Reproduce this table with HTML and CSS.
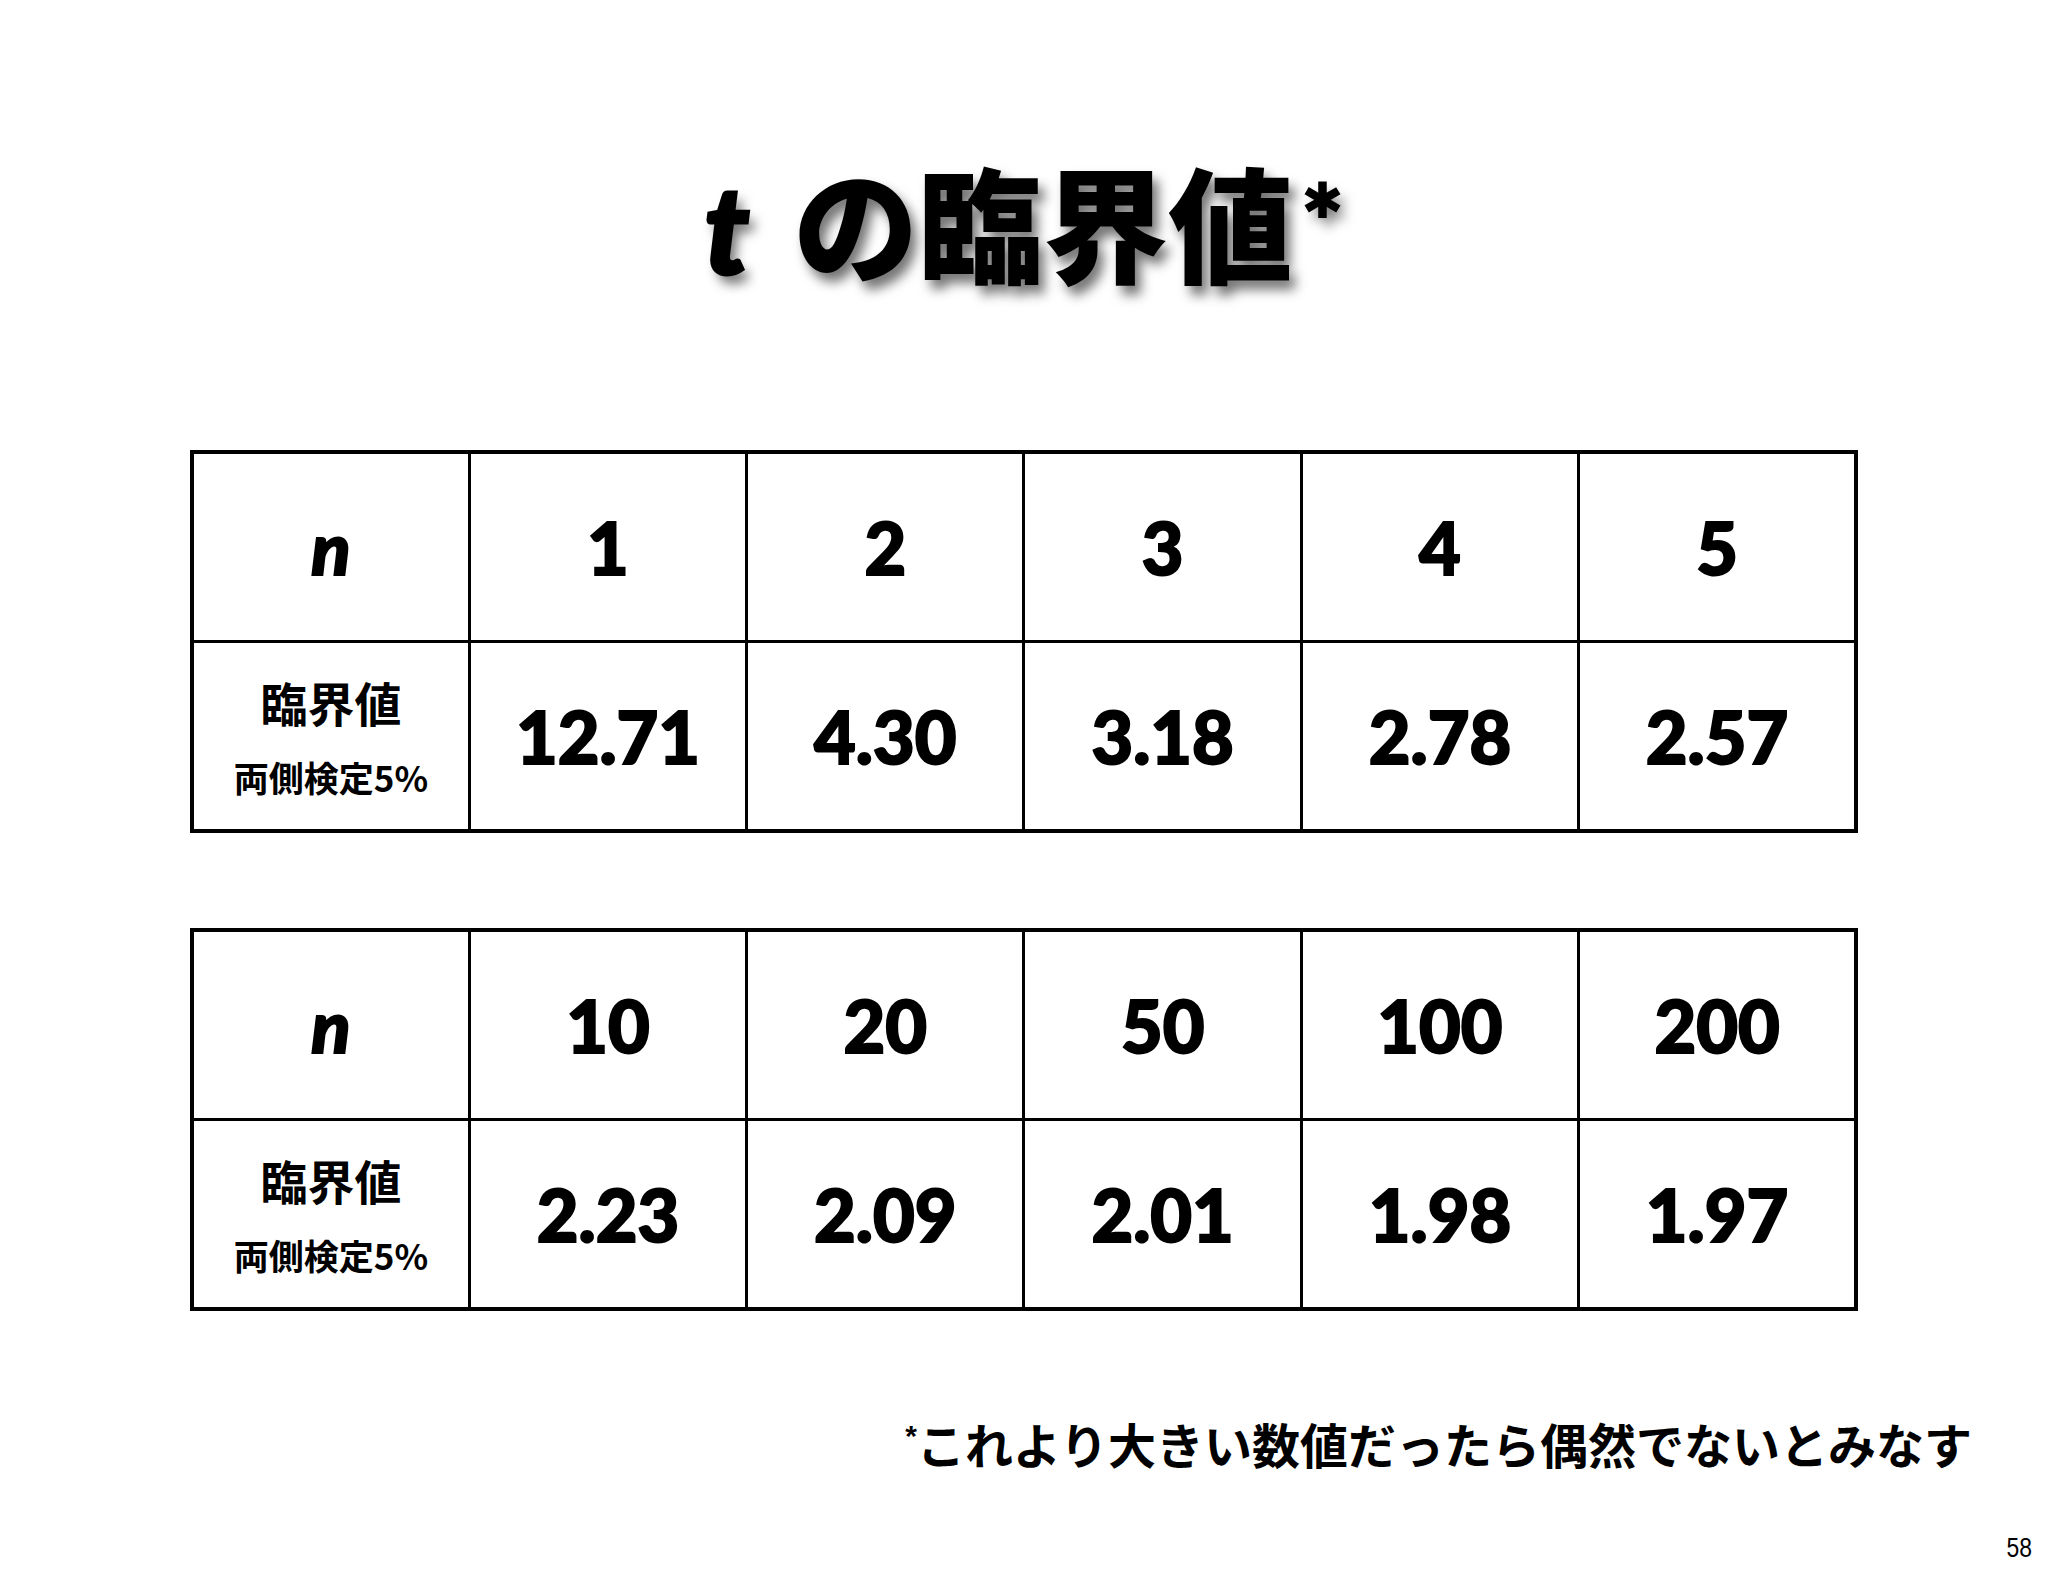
FILE: index.html
```html
<!DOCTYPE html>
<html lang="ja">
<head>
<meta charset="utf-8">
<title>t の臨界値</title>
<link rel="stylesheet" href="styles.css">
</head>
<body>
<div class="slide">
  <h1 class="title"><span class="t">t</span><span class="jp">の臨界値</span><span class="star">*</span></h1>

  <table class="crit first">
    <tr class="head">
      <td class="label"><span class="n">n</span></td>
      <td>1</td><td>2</td><td>3</td><td>4</td><td>5</td>
    </tr>
    <tr class="vals">
      <td class="label"><div class="l1">臨界値</div><div class="l2">両側検定5%</div></td>
      <td>12.71</td><td>4.30</td><td>3.18</td><td>2.78</td><td>2.57</td>
    </tr>
  </table>

  <table class="crit second">
    <tr class="head">
      <td class="label"><span class="n">n</span></td>
      <td>10</td><td>20</td><td>50</td><td>100</td><td>200</td>
    </tr>
    <tr class="vals">
      <td class="label"><div class="l1">臨界値</div><div class="l2">両側検定5%</div></td>
      <td>2.23</td><td>2.09</td><td>2.01</td><td>1.98</td><td>1.97</td>
    </tr>
  </table>

  <p class="note"><span class="nstar">*</span>これより大きい数値だったら偶然でないとみなす</p>
  <div class="page">58</div>
</div>
</body>
</html>
```

FILE: styles.css
```css
html, body {
  margin: 0;
  padding: 0;
  background: #fff;
}
.slide {
  width: 2048px;
  height: 1576px;
  position: relative;
  display: flex;
  flex-direction: column;
  color: #000;
  font-family: "Lato", "Noto Sans CJK JP", sans-serif;
}
.title {
  margin: 144px 0 0 0;
  height: 150px;
  line-height: 150px;
  text-align: center;
  font-family: "Lato", "Noto Sans CJK JP", sans-serif;
  font-weight: 900;
  font-size: 125px;
  text-shadow: 6px 9px 12px rgba(0, 0, 0, 0.55);
  white-space: nowrap;
}
.title .t {
  font-style: italic;
  font-weight: 900;
  font-size: 122px;
  -webkit-text-stroke: 3px #000;
  margin-right: 44px;
}
.title .jp {
  font-family: "Noto Sans CJK JP", sans-serif;
  font-weight: 900;
}
.title .star {
  font-size: 100px;
  margin-left: 8px;
  vertical-align: 16px;
  -webkit-text-stroke: 2px #000;
}
.crit {
  margin-left: 190px;
  width: 1668px;
  table-layout: fixed;
  border-collapse: collapse;
  border: 4px solid #000;
}
.crit.first { margin-top: 156px; }
.crit.second { margin-top: 95px; }
.crit td {
  border: 3px solid #000;
  height: 186px;
  padding: 0;
  text-align: center;
  vertical-align: middle;
  font-family: "Lato", sans-serif;
  font-weight: 900;
  font-size: 72px;
  line-height: 1;
  -webkit-text-stroke: 2px #000;
}
.crit .n {
  font-style: italic;
}
.crit .label .l1 {
  font-family: "Noto Sans CJK JP", sans-serif;
  font-weight: 700;
  font-size: 47px;
  line-height: 1;
  -webkit-text-stroke: 0;
}
.crit .label .l2 {
  margin-top: 34px;
  font-family: "Noto Sans CJK JP", sans-serif;
  font-weight: 700;
  font-size: 35px;
  line-height: 1;
  -webkit-text-stroke: 0;
}
.note {
  margin: 108px 76px 0 0;
  text-align: right;
  font-family: "Noto Sans CJK JP", sans-serif;
  font-weight: 700;
  font-size: 48px;
  line-height: 1;
}
.note .nstar {
  font-family: "Liberation Sans", sans-serif;
  font-size: 30px;
  vertical-align: 18px;
}
.page {
  position: absolute;
  right: 16px;
  bottom: 12px;
  font-family: "Liberation Sans", sans-serif;
  font-size: 27px;
  transform: scaleX(0.85);
  transform-origin: right bottom;
}
```
